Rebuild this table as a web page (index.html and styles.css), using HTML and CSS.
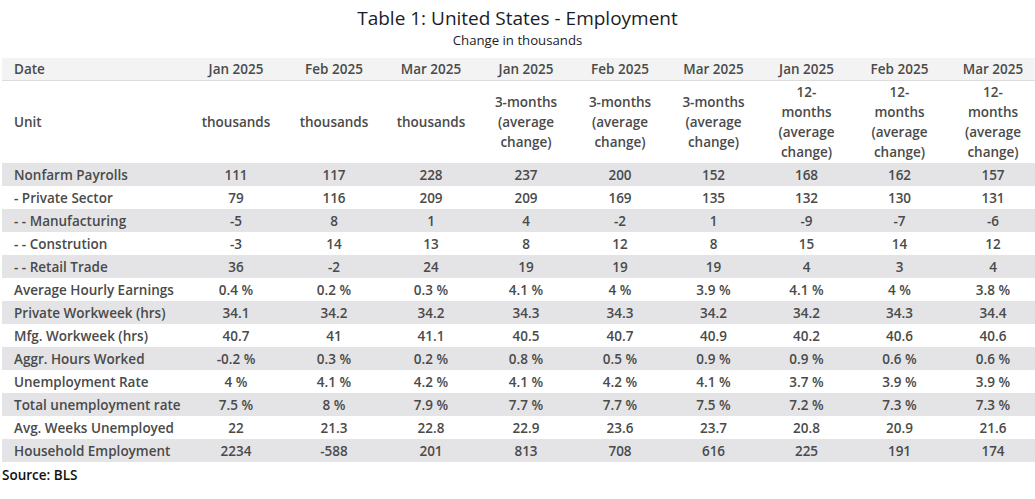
FILE: index.html
```html
<!DOCTYPE html>
<html>
<head>
<meta charset="utf-8">
<link rel="stylesheet" href="styles.css">
</head>
<body>
<div class="page">
  <h1 class="title">Table 1: United States - Employment</h1>
  <div class="subtitle">Change in thousands</div>
  <table class="data">
    <colgroup>
      <col class="c-label">
      <col class="c-a"><col class="c-a"><col class="c-b">
      <col class="c-c"><col class="c-c"><col class="c-d">
      <col class="c-d"><col class="c-d"><col class="c-c">
    </colgroup>
    <thead>
      <tr class="hdr">
        <th>Date</th><th>Jan 2025</th><th>Feb 2025</th><th>Mar 2025</th><th>Jan 2025</th><th>Feb 2025</th><th>Mar 2025</th><th>Jan 2025</th><th>Feb 2025</th><th>Mar 2025</th>
      </tr>
      <tr class="unit">
        <th>Unit</th><th>thousands</th><th>thousands</th><th>thousands</th>
        <th>3-months (average change)</th><th>3-months (average change)</th><th>3-months (average change)</th>
        <th>12-<br>months (average change)</th><th>12-<br>months (average change)</th><th>12-<br>months (average change)</th>
      </tr>
    </thead>
    <tbody>
      <tr><td>Nonfarm Payrolls</td><td>111</td><td>117</td><td>228</td><td>237</td><td>200</td><td>152</td><td>168</td><td>162</td><td>157</td></tr>
      <tr><td>- Private Sector</td><td>79</td><td>116</td><td>209</td><td>209</td><td>169</td><td>135</td><td>132</td><td>130</td><td>131</td></tr>
      <tr><td>- - Manufacturing</td><td>-5</td><td>8</td><td>1</td><td>4</td><td>-2</td><td>1</td><td>-9</td><td>-7</td><td>-6</td></tr>
      <tr><td>- - Constrution</td><td>-3</td><td>14</td><td>13</td><td>8</td><td>12</td><td>8</td><td>15</td><td>14</td><td>12</td></tr>
      <tr><td>- - Retail Trade</td><td>36</td><td>-2</td><td>24</td><td>19</td><td>19</td><td>19</td><td>4</td><td>3</td><td>4</td></tr>
      <tr><td>Average Hourly Earnings</td><td>0.4 %</td><td>0.2 %</td><td>0.3 %</td><td>4.1 %</td><td>4 %</td><td>3.9 %</td><td>4.1 %</td><td>4 %</td><td>3.8 %</td></tr>
      <tr><td>Private Workweek (hrs)</td><td>34.1</td><td>34.2</td><td>34.2</td><td>34.3</td><td>34.3</td><td>34.2</td><td>34.2</td><td>34.3</td><td>34.4</td></tr>
      <tr><td>Mfg. Workweek (hrs)</td><td>40.7</td><td>41</td><td>41.1</td><td>40.5</td><td>40.7</td><td>40.9</td><td>40.2</td><td>40.6</td><td>40.6</td></tr>
      <tr><td>Aggr. Hours Worked</td><td>-0.2 %</td><td>0.3 %</td><td>0.2 %</td><td>0.8 %</td><td>0.5 %</td><td>0.9 %</td><td>0.9 %</td><td>0.6 %</td><td>0.6 %</td></tr>
      <tr><td>Unemployment Rate</td><td>4 %</td><td>4.1 %</td><td>4.2 %</td><td>4.1 %</td><td>4.2 %</td><td>4.1 %</td><td>3.7 %</td><td>3.9 %</td><td>3.9 %</td></tr>
      <tr><td>Total unemployment rate</td><td>7.5 %</td><td>8 %</td><td>7.9 %</td><td>7.7 %</td><td>7.7 %</td><td>7.5 %</td><td>7.2 %</td><td>7.3 %</td><td>7.3 %</td></tr>
      <tr><td>Avg. Weeks Unemployed</td><td>22</td><td>21.3</td><td>22.8</td><td>22.9</td><td>23.6</td><td>23.7</td><td>20.8</td><td>20.9</td><td>21.6</td></tr>
      <tr><td>Household Employment</td><td>2234</td><td>-588</td><td>201</td><td>813</td><td>708</td><td>616</td><td>225</td><td>191</td><td>174</td></tr>
    </tbody>
  </table>
  <div class="source">Source: BLS</div>
</div>
</body>
</html>
```
FILE: styles.css
```css
html, body {
  margin: 0;
  padding: 0;
  background: #ffffff;
  overflow: hidden;
}
body {
  font-family: "Open Sans", "Noto Sans", "Liberation Sans", sans-serif;
  width: 1035px;
  height: 499px;
}
.page {
  padding: 5px 0 0 2px;
}
.title {
  margin: 0;
  text-align: center;
  font-size: 19px;
  font-weight: 400;
  line-height: 26px;
  color: #1c1c28;
  padding-right: 2px;
}
.subtitle {
  text-align: center;
  font-size: 13.2px;
  line-height: 18px;
  color: #1c1c28;
  margin-bottom: 9px;
  padding-right: 2px;
}
.data {
  border-collapse: collapse;
  table-layout: fixed;
  width: 1038px;
  font-size: 13.5px;
  font-weight: 600;
  color: #4a4a4a;
}
.c-label { width: 185px; }
.c-a { width: 98px; }
.c-b { width: 96px; }
.c-c { width: 94px; }
.c-d { width: 93px; }
.data th, .data td {
  text-align: center;
  font-weight: 600;
  line-height: 20px;
  padding: 1.5px 4px;
}
.data th:first-child, .data td:first-child {
  text-align: left;
  padding-left: 12px;
}
.hdr th {
  background: #f3f3f3;
  padding: 1px 4px;
  border-bottom: 1px solid #dcdcdc;
}
.unit th {
  padding: 1px 4px;
  height: 80px;
}
.data tbody tr:nth-child(odd) td {
  background: #e4e4e6;
}
.source {
  font-size: 13.5px;
  font-weight: 600;
  color: #111;
  line-height: 20px;
  padding-top: 3px;
}
```
